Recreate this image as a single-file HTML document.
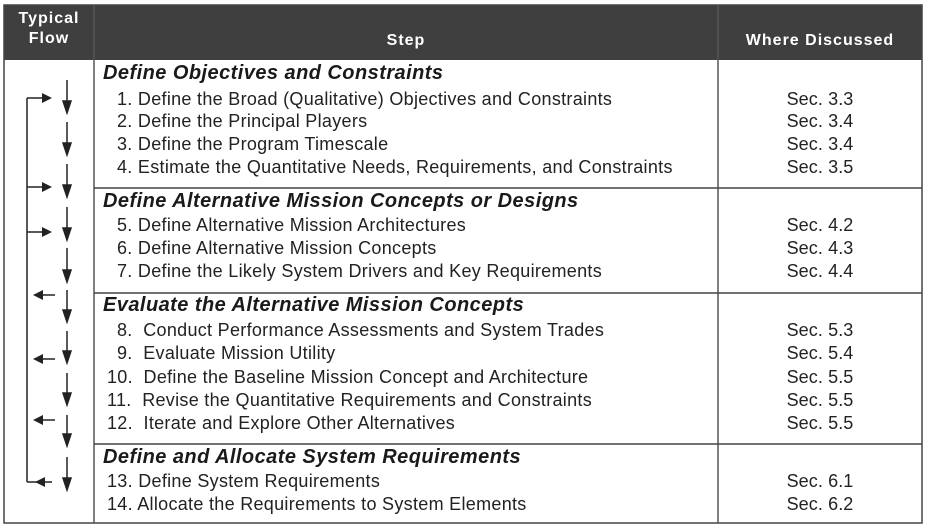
<!DOCTYPE html><html><head><style>
body{margin:0;width:925px;height:529px;background:#fff;position:relative;overflow:hidden;font-family:"Liberation Sans",Arial,sans-serif;color:#222}
.t{position:absolute;white-space:nowrap;font-size:18px;line-height:20px;letter-spacing:0.3px}
.h{font-weight:bold;font-style:italic;font-size:20px;color:#1a1a1a;letter-spacing:0.45px}
.s{left:718px;width:204px;text-align:center;letter-spacing:0.1px}
.hd{color:#fff;font-weight:bold;font-size:16px;letter-spacing:1px;position:absolute;text-align:center;line-height:20px}
</style></head><body>
<svg width="925" height="529" style="position:absolute;left:0;top:0">
<rect x="4" y="5" width="918" height="55" fill="#3f3f3f"/>
<rect x="4" y="5" width="918" height="518" fill="none" stroke="#444" stroke-width="1.5"/>
<line x1="94" y1="5" x2="94" y2="523" stroke="#555" stroke-width="1.5"/>
<line x1="718" y1="5" x2="718" y2="523" stroke="#555" stroke-width="1.5"/>
<g stroke="#444" stroke-width="1.5"><line x1="94" y1="188" x2="922" y2="188"/><line x1="94" y1="293" x2="922" y2="293"/><line x1="94" y1="444" x2="922" y2="444"/></g>
<g stroke="#222" stroke-width="1.5" fill="none">
<line x1="27" y1="98" x2="27" y2="482"/>
<line x1="27" y1="98" x2="44" y2="98"/><line x1="27" y1="187" x2="44" y2="187"/><line x1="27" y1="232" x2="44" y2="232"/>
<line x1="42" y1="295" x2="55" y2="295"/><line x1="42" y1="359" x2="55" y2="359"/><line x1="42" y1="420" x2="55" y2="420"/><line x1="27" y1="482" x2="52" y2="482"/>
</g>
<g fill="#222">
<polygon points="52,98 42,93 42,103"/><polygon points="52,187 42,182 42,192"/><polygon points="52,232 42,227 42,237"/>
<polygon points="33,295 43,290 43,300"/><polygon points="33,359 43,354 43,364"/><polygon points="33,420 43,415 43,425"/><polygon points="35,482 45,477 45,487"/>
</g>
<g stroke="#222" stroke-width="1.5" fill="#222">
<line x1="67" y1="80" x2="67" y2="104"/><polygon points="67,113 63,101 71,101"/>
<line x1="67" y1="122" x2="67" y2="146"/><polygon points="67,155 63,143 71,143"/>
<line x1="67" y1="164" x2="67" y2="188"/><polygon points="67,197 63,185 71,185"/>
<line x1="67" y1="207" x2="67" y2="231"/><polygon points="67,240 63,228 71,228"/>
<line x1="67" y1="248" x2="67" y2="273"/><polygon points="67,282 63,270 71,270"/>
<line x1="67" y1="290" x2="67" y2="313"/><polygon points="67,322 63,310 71,310"/>
<line x1="67" y1="331" x2="67" y2="354"/><polygon points="67,363 63,351 71,351"/>
<line x1="67" y1="373" x2="67" y2="396"/><polygon points="67,405 63,393 71,393"/>
<line x1="67" y1="415" x2="67" y2="437"/><polygon points="67,446 63,434 71,434"/>
<line x1="67" y1="457" x2="67" y2="481"/><polygon points="67,490 63,478 71,478"/>
</g>
</svg>
<div class="hd" style="left:4px;width:90px;top:9px">Typical<br>Flow</div>
<div class="hd" style="left:94px;width:624px;top:31px">Step</div>
<div class="hd" style="left:718px;width:204px;top:31px">Where Discussed</div>

<div class="t h" style="left:103px;top:63px">Define Objectives and Constraints</div>
<div class="t" style="left:117px;top:89px">1. Define the Broad (Qualitative) Objectives and Constraints</div>
<div class="t" style="left:117px;top:111px">2. Define the Principal Players</div>
<div class="t" style="left:117px;top:134px">3. Define the Program Timescale</div>
<div class="t" style="left:117px;top:157px">4. Estimate the Quantitative Needs, Requirements, and Constraints</div>
<div class="t s" style="top:89px">Sec. 3.3</div><div class="t s" style="top:111px">Sec. 3.4</div><div class="t s" style="top:134px">Sec. 3.4</div><div class="t s" style="top:157px">Sec. 3.5</div>

<div class="t h" style="left:103px;top:191px">Define Alternative Mission Concepts or Designs</div>
<div class="t" style="left:117px;top:215px">5. Define Alternative Mission Architectures</div>
<div class="t" style="left:117px;top:238px">6. Define Alternative Mission Concepts</div>
<div class="t" style="left:117px;top:261px">7. Define the Likely System Drivers and Key Requirements</div>
<div class="t s" style="top:215px">Sec. 4.2</div><div class="t s" style="top:238px">Sec. 4.3</div><div class="t s" style="top:261px">Sec. 4.4</div>

<div class="t h" style="left:103px;top:295px">Evaluate the Alternative Mission Concepts</div>
<div class="t" style="left:117px;top:320px">8.&nbsp; Conduct Performance Assessments and System Trades</div>
<div class="t" style="left:117px;top:343px">9.&nbsp; Evaluate Mission Utility</div>
<div class="t" style="left:107px;top:367px">10.&nbsp; Define the Baseline Mission Concept and Architecture</div>
<div class="t" style="left:107px;top:390px">11.&nbsp; Revise the Quantitative Requirements and Constraints</div>
<div class="t" style="left:107px;top:413px">12.&nbsp; Iterate and Explore Other Alternatives</div>
<div class="t s" style="top:320px">Sec. 5.3</div><div class="t s" style="top:343px">Sec. 5.4</div><div class="t s" style="top:367px">Sec. 5.5</div><div class="t s" style="top:390px">Sec. 5.5</div><div class="t s" style="top:413px">Sec. 5.5</div>

<div class="t h" style="left:103px;top:447px">Define and Allocate System Requirements</div>
<div class="t" style="left:107px;top:471px">13. Define System Requirements</div>
<div class="t" style="left:107px;top:494px">14. Allocate the Requirements to System Elements</div>
<div class="t s" style="top:471px">Sec. 6.1</div><div class="t s" style="top:494px">Sec. 6.2</div>
</body></html>
